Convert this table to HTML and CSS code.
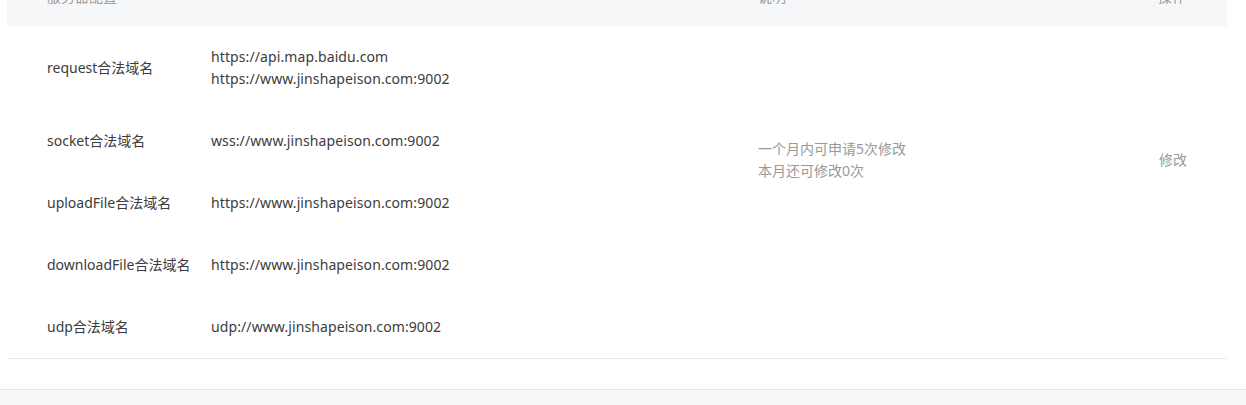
FILE: index.html
```html
<!DOCTYPE html>
<html lang="zh-CN">
  <head>
    <meta charset="utf-8" />
    <meta name="viewport" content="width=device-width, initial-scale=1" />
    <link rel="stylesheet" href="styles.css">
    <title>服务器域名</title>
  </head>
  <body>
    <div class="page">
      <div class="domain-table">
        <!-- 表头 -->
        <div class="domain-table__head">
          <div class="col col--name">服务器配置</div>
          <div class="col col--value"></div>
          <div class="col col--desc">说明</div>
          <div class="col col--op">操作</div>
        </div>

        <!-- 内容 -->
        <div class="domain-table__body">
          <div class="domain-list">
            <div class="domain-row">
              <div class="col col--name">request合法域名</div>
              <div class="col col--value">
                <div>https://api.map.baidu.com</div>
                <div>https://www.jinshapeison.com:9002</div>
              </div>
            </div>
            <div class="domain-row">
              <div class="col col--name">socket合法域名</div>
              <div class="col col--value">wss://www.jinshapeison.com:9002</div>
            </div>
            <div class="domain-row">
              <div class="col col--name">uploadFile合法域名</div>
              <div class="col col--value">https://www.jinshapeison.com:9002</div>
            </div>
            <div class="domain-row">
              <div class="col col--name">downloadFile合法域名</div>
              <div class="col col--value">https://www.jinshapeison.com:9002</div>
            </div>
            <div class="domain-row">
              <div class="col col--name">udp合法域名</div>
              <div class="col col--value">udp://www.jinshapeison.com:9002</div>
            </div>
          </div>
          <div class="col col--desc domain-desc">
            <div>一个月内可申请5次修改</div>
            <div>本月还可修改0次</div>
          </div>
          <div class="col col--op domain-op">
            <a class="link-edit">修改</a>
          </div>
        </div>
      </div>
    </div>
    <div class="page-footer"></div>
  </body>
</html>
```

FILE: styles.css
```css
/* 基础样式 */
*, *::before, *::after {
  box-sizing: border-box;
}

html, body {
  margin: 0;
  padding: 0;
  background: #f6f7f9;
  font-family: 'Noto Sans', 'Noto Sans CJK SC', sans-serif;
  font-size: 14px;
  color: #3c3c3c;
  overflow: hidden;
}

/* 页面卡片（已向下滚动） */
.page {
  background: #fff;
  margin-top: -34px;
  padding: 0 19px 30px 7px;
  border-bottom: 1px solid #e4e5e8;
}

.domain-table {
  border-bottom: 1px solid #e8e9ec;
}

.domain-table__head,
.domain-table__body {
  display: grid;
  grid-template-columns: 204px 547px 400px 1fr;
}

.domain-table__head {
  height: 60px;
  align-items: center;
  background: #f6f7f9;
  color: #999;
}

.col--name {
  padding-left: 40px;
  white-space: nowrap;
}

.col--value {
  letter-spacing: 0.1px;
}

.domain-list {
  grid-column: 1 / 3;
}

.domain-row {
  display: grid;
  grid-template-columns: 204px 547px;
  align-items: center;
  padding: 20px 0;
  line-height: 22px;
}

.domain-desc {
  padding-top: 112px;
  line-height: 22px;
  color: #999;
}

.domain-op {
  padding-top: 123px;
  padding-left: 1px;
  line-height: 22px;
}

.link-edit {
  color: #999;
  cursor: pointer;
}

.page-footer {
  height: 20px;
}
```
